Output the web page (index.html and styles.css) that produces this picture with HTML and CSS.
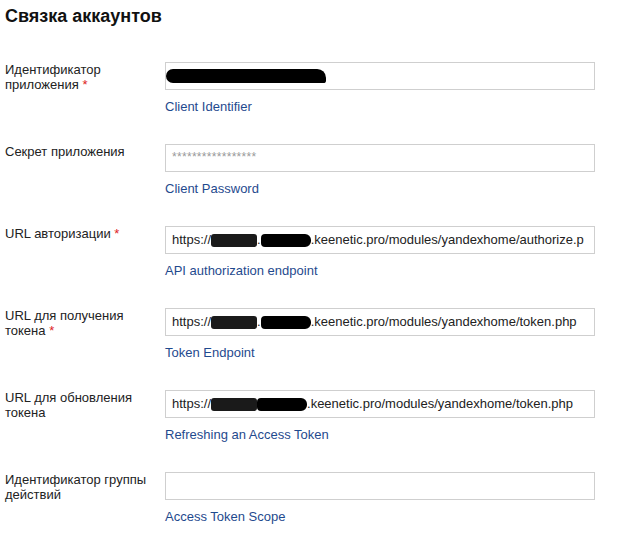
FILE: index.html
```html
<!DOCTYPE html>
<html lang="ru">
<head>
<meta charset="utf-8">
<title>Связка аккаунтов</title>
<link rel="stylesheet" href="styles.css">
</head>
<body>
<div class="page">
  <h2 class="title">Связка аккаунтов</h2>
  <div class="form">
    <div class="row">
      <div class="label">Идентификатор приложения <span class="req">*</span></div>
      <div class="field">
        <div class="input"><span class="blob blob-id"></span></div>
        <div class="hint">Client Identifier</div>
      </div>
    </div>
    <div class="row">
      <div class="label">Секрет приложения</div>
      <div class="field">
        <div class="input"><span class="pwd">*****************</span></div>
        <div class="hint">Client Password</div>
      </div>
    </div>
    <div class="row">
      <div class="label">URL авторизации <span class="req">*</span></div>
      <div class="field">
        <div class="input">https://<span class="blob b1"></span>.<span class="blob b2"></span>.keenetic.pro/modules/yandexhome/authorize.p</div>
        <div class="hint">API authorization endpoint</div>
      </div>
    </div>
    <div class="row">
      <div class="label">URL для получения токена <span class="req">*</span></div>
      <div class="field">
        <div class="input">https://<span class="blob b1"></span>.<span class="blob b2"></span>.keenetic.pro/modules/yandexhome/token.php</div>
        <div class="hint">Token Endpoint</div>
      </div>
    </div>
    <div class="row">
      <div class="label">URL для обновления токена</div>
      <div class="field">
        <div class="input">https://<span class="blob b1"></span><span class="blob b2"></span>.keenetic.pro/modules/yandexhome/token.php</div>
        <div class="hint">Refreshing an Access Token</div>
      </div>
    </div>
    <div class="row">
      <div class="label">Идентификатор группы действий</div>
      <div class="field">
        <div class="input"></div>
        <div class="hint">Access Token Scope</div>
      </div>
    </div>
  </div>
</div>
</body>
</html>
```
FILE: styles.css
```css
html, body {
  margin: 0;
  padding: 0;
  background: #fff;
}
body {
  font-family: "Liberation Sans", Arial, sans-serif;
  color: #222;
}
.page {
  padding: 5px 5px 0 5px;
}
.title {
  margin: 0;
  font-size: 18px;
  line-height: 22px;
  font-weight: bold;
  color: #111;
}
.form {
  margin-top: 35px;
  display: flex;
  flex-direction: column;
  gap: 30px;
}
.row {
  display: grid;
  grid-template-columns: 160px 430px;
  height: 52px;
}
.label {
  font-size: 13px;
  line-height: 15px;
  padding-top: 0;
  padding-right: 14px;
  color: #222;
}
.req {
  color: #d22;
}
.input {
  box-sizing: border-box;
  height: 28px;
  border: 1px solid #cfcfcf;
  padding: 0 6px;
  font-size: 13px;
  line-height: 26px;
  color: #222;
  white-space: nowrap;
  overflow: hidden;
  display: flex;
  align-items: center;
}
.hint {
  margin-top: 9px;
  font-size: 13px;
  line-height: 16px;
  color: #1f4a8e;
}
.pwd {
  font-size: 12px;
  color: #9a9a9a;
  letter-spacing: 0.3px;
  margin-top: -2px;
}
.blob {
  display: inline-block;
  height: 13px;
  background: #000;
}
.blob-id {
  width: 160px;
  height: 14px;
  margin-left: -6px;
  border-radius: 8px 10px 3px 8px;
}
.b1 {
  width: 46px;
  border-radius: 3px;
  background: #1a1a1a;
}
.b2 {
  width: 50px;
  border-radius: 4px 6px 6px 4px;
}
```
